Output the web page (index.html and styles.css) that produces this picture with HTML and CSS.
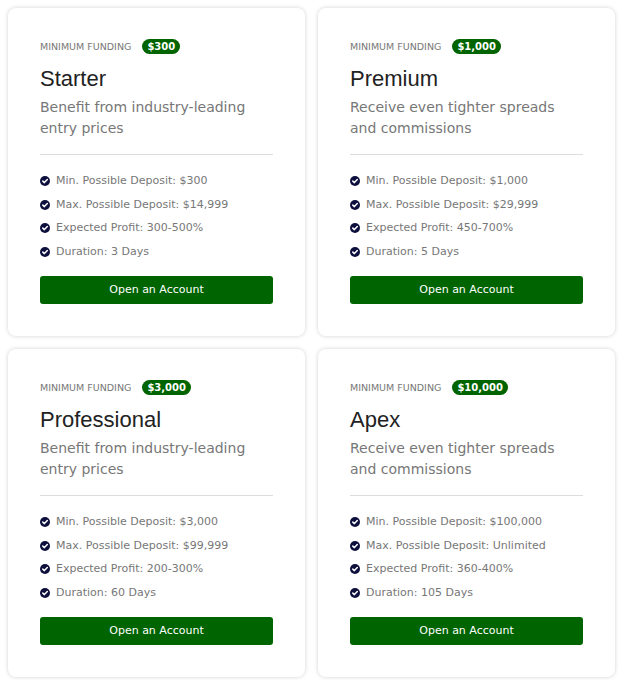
FILE: index.html
```html
<!DOCTYPE html>
<html>
<head>
<meta charset="utf-8">
<link rel="stylesheet" href="styles.css">
</head>
<body>
<div class="grid">
  <div class="card">
    <div class="head"><span class="label">MINIMUM FUNDING</span><span class="badge">$300</span></div>
    <h2 class="title">Starter</h2>
    <p class="desc">Benefit from industry-leading entry prices</p>
    <hr class="divider">
    <ul class="list">
      <li><svg class="chk" viewBox="0 0 10 10"><circle cx="5" cy="5" r="5"/><path d="M2.8 5.1 L4.4 6.6 L7.3 3.6"/></svg>Min. Possible Deposit: $300</li>
      <li><svg class="chk" viewBox="0 0 10 10"><circle cx="5" cy="5" r="5"/><path d="M2.8 5.1 L4.4 6.6 L7.3 3.6"/></svg>Max. Possible Deposit: $14,999</li>
      <li><svg class="chk" viewBox="0 0 10 10"><circle cx="5" cy="5" r="5"/><path d="M2.8 5.1 L4.4 6.6 L7.3 3.6"/></svg>Expected Profit: 300-500%</li>
      <li><svg class="chk" viewBox="0 0 10 10"><circle cx="5" cy="5" r="5"/><path d="M2.8 5.1 L4.4 6.6 L7.3 3.6"/></svg>Duration: 3 Days</li>
    </ul>
    <a class="btn">Open an Account</a>
  </div>
  <div class="card">
    <div class="head"><span class="label">MINIMUM FUNDING</span><span class="badge">$1,000</span></div>
    <h2 class="title">Premium</h2>
    <p class="desc">Receive even tighter spreads and commissions</p>
    <hr class="divider">
    <ul class="list">
      <li><svg class="chk" viewBox="0 0 10 10"><circle cx="5" cy="5" r="5"/><path d="M2.8 5.1 L4.4 6.6 L7.3 3.6"/></svg>Min. Possible Deposit: $1,000</li>
      <li><svg class="chk" viewBox="0 0 10 10"><circle cx="5" cy="5" r="5"/><path d="M2.8 5.1 L4.4 6.6 L7.3 3.6"/></svg>Max. Possible Deposit: $29,999</li>
      <li><svg class="chk" viewBox="0 0 10 10"><circle cx="5" cy="5" r="5"/><path d="M2.8 5.1 L4.4 6.6 L7.3 3.6"/></svg>Expected Profit: 450-700%</li>
      <li><svg class="chk" viewBox="0 0 10 10"><circle cx="5" cy="5" r="5"/><path d="M2.8 5.1 L4.4 6.6 L7.3 3.6"/></svg>Duration: 5 Days</li>
    </ul>
    <a class="btn">Open an Account</a>
  </div>
  <div class="card">
    <div class="head"><span class="label">MINIMUM FUNDING</span><span class="badge">$3,000</span></div>
    <h2 class="title">Professional</h2>
    <p class="desc">Benefit from industry-leading entry prices</p>
    <hr class="divider">
    <ul class="list">
      <li><svg class="chk" viewBox="0 0 10 10"><circle cx="5" cy="5" r="5"/><path d="M2.8 5.1 L4.4 6.6 L7.3 3.6"/></svg>Min. Possible Deposit: $3,000</li>
      <li><svg class="chk" viewBox="0 0 10 10"><circle cx="5" cy="5" r="5"/><path d="M2.8 5.1 L4.4 6.6 L7.3 3.6"/></svg>Max. Possible Deposit: $99,999</li>
      <li><svg class="chk" viewBox="0 0 10 10"><circle cx="5" cy="5" r="5"/><path d="M2.8 5.1 L4.4 6.6 L7.3 3.6"/></svg>Expected Profit: 200-300%</li>
      <li><svg class="chk" viewBox="0 0 10 10"><circle cx="5" cy="5" r="5"/><path d="M2.8 5.1 L4.4 6.6 L7.3 3.6"/></svg>Duration: 60 Days</li>
    </ul>
    <a class="btn">Open an Account</a>
  </div>
  <div class="card">
    <div class="head"><span class="label">MINIMUM FUNDING</span><span class="badge">$10,000</span></div>
    <h2 class="title">Apex</h2>
    <p class="desc">Receive even tighter spreads and commissions</p>
    <hr class="divider">
    <ul class="list">
      <li><svg class="chk" viewBox="0 0 10 10"><circle cx="5" cy="5" r="5"/><path d="M2.8 5.1 L4.4 6.6 L7.3 3.6"/></svg>Min. Possible Deposit: $100,000</li>
      <li><svg class="chk" viewBox="0 0 10 10"><circle cx="5" cy="5" r="5"/><path d="M2.8 5.1 L4.4 6.6 L7.3 3.6"/></svg>Max. Possible Deposit: Unlimited</li>
      <li><svg class="chk" viewBox="0 0 10 10"><circle cx="5" cy="5" r="5"/><path d="M2.8 5.1 L4.4 6.6 L7.3 3.6"/></svg>Expected Profit: 360-400%</li>
      <li><svg class="chk" viewBox="0 0 10 10"><circle cx="5" cy="5" r="5"/><path d="M2.8 5.1 L4.4 6.6 L7.3 3.6"/></svg>Duration: 105 Days</li>
    </ul>
    <a class="btn">Open an Account</a>
  </div>
</div>
</body>
</html>
```

FILE: styles.css
```css
html, body {
  margin: 0;
  padding: 0;
  background: #fff;
}
body {
  padding: 8px;
  font-family: "DejaVu Sans", Verdana, sans-serif;
}
.grid {
  display: grid;
  grid-template-columns: 297px 297px;
  column-gap: 13px;
  row-gap: 13px;
}
.card {
  background: #fff;
  border-radius: 8px;
  box-shadow: 0 0 4px rgba(0,0,0,0.18);
  padding: 31px 32px 32px;
  height: 328px;
  box-sizing: border-box;
  display: flex;
  flex-direction: column;
}
.head {
  display: flex;
  align-items: center;
  height: 15px;
}
.label {
  font-size: 9.5px;
  color: #777;
}
.badge {
  margin-left: 11px;
  background: #006400;
  color: #fff;
  font-weight: bold;
  font-size: 10px;
  line-height: 15px;
  height: 15px;
  padding: 0 5px;
  border-radius: 8px;
}
.title {
  margin: 12px 0 0;
  font-family: "Liberation Sans", Arial, sans-serif;
  font-weight: normal;
  font-size: 22px;
  line-height: 26px;
  color: #222;
}
.desc {
  margin: 5px 0 0;
  font-size: 14px;
  line-height: 21px;
  color: #777;
}
.divider {
  margin: 15px 0 0;
  border: 0;
  height: 1px;
  background: #ddd;
}
.list {
  list-style: none;
  margin: 19px 0 0;
  padding: 0;
  display: flex;
  flex-direction: column;
  gap: 9.5px;
}
.list li {
  display: flex;
  align-items: center;
  font-size: 11px;
  line-height: 14px;
  color: #777;
}
.chk {
  width: 10px;
  height: 10px;
  margin-right: 6px;
  flex: none;
}
.chk circle { fill: #0d0f3d; }
.chk path {
  fill: none;
  stroke: #fff;
  stroke-width: 1.5;
  stroke-linecap: round;
  stroke-linejoin: round;
}
.btn {
  margin-top: 17px;
  display: block;
  background: #006400;
  color: #fff;
  text-align: center;
  font-size: 11px;
  line-height: 28px;
  height: 28px;
  border-radius: 3px;
}
```
